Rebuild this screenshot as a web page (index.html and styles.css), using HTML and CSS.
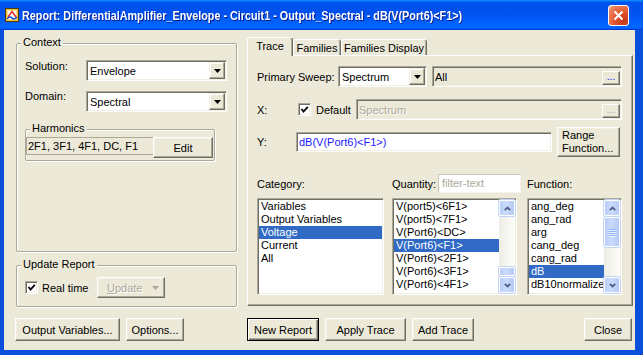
FILE: index.html
```html
<!DOCTYPE html>
<html>
<head>
    <title>Report</title>
    <link rel="stylesheet" href="styles.css">
</head>
<body>
    <div id="window">
        <div id="titleBar">
            <svg class="appIcon" width="14" height="14" viewBox="0 0 14 14">
                <rect x="0.5" y="0.5" width="13" height="13" fill="#f2c12e" stroke="#4a3c0c"/>
                <rect x="2.5" y="2.5" width="9" height="9" fill="#fff"/>
                <path d="M3 9 L7 3.5 L11 9" fill="none" stroke="#e0301e" stroke-width="1.6"/>
                <path d="M2 11 Q5 7.5 7 10 T12 9" fill="none" stroke="#1e50d0" stroke-width="1.6"/>
            </svg>
            <span class="titleText">Report: DifferentialAmplifier_Envelope - Circuit1 - Output_Spectral - dB(V(Port6)&lt;F1&gt;)</span>
            <div class="closeBtn">
                <svg width="11" height="11" viewBox="0 0 11 11"><path d="M1.5 1.5 L9.5 9.5 M9.5 1.5 L1.5 9.5" stroke="#fff" stroke-width="2"/></svg>
            </div>
        </div>
        <div id="client">
            <div id="leftSide">
                <div class="group contextGroup">
                    <span class="caption">Context</span>
                    <div class="formRow">
                        <span class="ctxLabel">Solution:</span>
                        <div class="combo ctxCombo"><span class="comboText">Envelope</span><span class="dropBtn"><svg width="7" height="4"><polygon points="0,0 7,0 3.5,4" fill="#000"/></svg></span></div>
                    </div>
                    <div class="formRow">
                        <span class="ctxLabel domainLabel">Domain:</span>
                        <div class="combo ctxCombo"><span class="comboText">Spectral</span><span class="dropBtn"><svg width="7" height="4"><polygon points="0,0 7,0 3.5,4" fill="#000"/></svg></span></div>
                    </div>
                    <div class="group harmonicsGroup">
                        <span class="caption">Harmonics</span>
                        <div class="harmonicsRow">
                            <div class="staticBox">2F1, 3F1, 4F1, DC, F1</div>
                            <div class="btn editBtn">Edit</div>
                        </div>
                    </div>
                </div>
                <div class="group updateGroup">
                    <span class="caption">Update Report</span>
                    <div class="updateRow">
                        <span class="checkbox"><svg width="9" height="9"><polyline points="1.5,4 3.5,6.5 7.8,1.8" fill="none" stroke="#000" stroke-width="1.8"/></svg></span>
                        <span class="checkLabel realTimeLabel">Real time</span>
                        <div class="btn updateBtn"><span class="disabledText"><u>U</u>pdate</span><svg width="7" height="4"><polygon points="0,0 7,0 3.5,4" fill="#ACA899"/></svg></div>
                    </div>
                </div>
                <div class="buttonRow">
                    <div class="btn outputVarsBtn">Output Variables...</div>
                    <div class="btn optionsBtn">Options...</div>
                </div>
            </div>

            <div id="rightSide">
                <div class="tabStrip">
                    <div class="tab selected traceTab">Trace</div>
                    <div class="tab familiesTab">Families</div>
                    <div class="tab famDisplayTab">Families Display</div>
                </div>
                <div class="tabPane">
                    <div class="paneRow sweepRow">
                        <span class="sweepLabel">Primary Sweep:</span>
                        <div class="combo sweepCombo"><span class="comboText">Spectrum</span><span class="dropBtn"><svg width="7" height="4"><polygon points="0,0 7,0 3.5,4" fill="#000"/></svg></span></div>
                        <div class="field readonlyField allField"><span class="fieldText">All</span><span class="ellipsisBtn">...</span></div>
                    </div>
                    <div class="paneRow xRow">
                        <span class="xLabel">X:</span>
                        <span class="checkbox"><svg width="9" height="9"><polyline points="1.5,4 3.5,6.5 7.8,1.8" fill="none" stroke="#000" stroke-width="1.8"/></svg></span>
                        <span class="checkLabel defaultLabel">Default</span>
                        <div class="field readonlyField specField"><span class="fieldText disabledText">Spectrum</span><span class="ellipsisBtn disabledDots">...</span></div>
                    </div>
                    <div class="paneRow yRow">
                        <span class="yLabel">Y:</span>
                        <div class="field exprField"><span class="fieldText">dB(V(Port6)&lt;F1&gt;)</span></div>
                        <div class="btn rangeBtn">Range<br>Function...</div>
                    </div>
                    <div class="paneRow headRow">
                        <span class="colHead catHead">Category:</span>
                        <div class="colHead qtyHead"><span class="qtyLabel">Quantity:</span><div class="filterBox">filter-text</div></div>
                        <span class="colHead funcHead">Function:</span>
                    </div>
                    <div class="paneRow listRow">
                        <div class="listBox catList">
                            <div class="listItems">
                                <div class="item">Variables</div>
                                <div class="item">Output Variables</div>
                                <div class="item sel">Voltage</div>
                                <div class="item">Current</div>
                                <div class="item">All</div>
                            </div>
                        </div>
                        <div class="listBox qtyList">
                            <div class="listItems">
                                <div class="item">V(port5)&lt;6F1&gt;</div>
                                <div class="item">V(port5)&lt;7F1&gt;</div>
                                <div class="item">V(Port6)&lt;DC&gt;</div>
                                <div class="item sel">V(Port6)&lt;F1&gt;</div>
                                <div class="item">V(Port6)&lt;2F1&gt;</div>
                                <div class="item">V(Port6)&lt;3F1&gt;</div>
                                <div class="item">V(Port6)&lt;4F1&gt;</div>
                                <div class="item">V(Port6)&lt;5F1&gt;</div>
                            </div>
                            <div class="vscroll">
                                <div class="sbBtn"><svg width="7" height="5"><polyline points="0.8,4.2 3.5,1.5 6.2,4.2" fill="none" stroke="#4D6185" stroke-width="1.8"/></svg></div>
                                <div class="sbTrack"><div class="sbThumb smallThumb"></div></div>
                                <div class="sbBtn"><svg width="7" height="5"><polyline points="0.8,0.8 3.5,3.5 6.2,0.8" fill="none" stroke="#4D6185" stroke-width="1.8"/></svg></div>
                            </div>
                        </div>
                        <div class="listBox funcList">
                            <div class="listItems">
                                <div class="item">ang_deg</div>
                                <div class="item">ang_rad</div>
                                <div class="item">arg</div>
                                <div class="item">cang_deg</div>
                                <div class="item">cang_rad</div>
                                <div class="item sel">dB</div>
                                <div class="item">dB10normalize</div>
                                <div class="item">dB20normalize</div>
                            </div>
                            <div class="vscroll">
                                <div class="sbBtn"><svg width="7" height="5"><polyline points="0.8,4.2 3.5,1.5 6.2,4.2" fill="none" stroke="#4D6185" stroke-width="1.8"/></svg></div>
                                <div class="sbTrack"><div class="sbThumb bigThumb"><i></i><i></i><i></i><i></i></div></div>
                                <div class="sbBtn"><svg width="7" height="5"><polyline points="0.8,0.8 3.5,3.5 6.2,0.8" fill="none" stroke="#4D6185" stroke-width="1.8"/></svg></div>
                            </div>
                        </div>
                    </div>
                </div>
                <div class="buttonRow rightButtons">
                    <div class="btn defaultBtn newReportBtn">New Report</div>
                    <div class="btn applyBtn">Apply Trace</div>
                    <div class="btn addBtn">Add Trace</div>
                    <div class="spacer"></div>
                    <div class="btn closeDlgBtn">Close</div>
                </div>
            </div>
        </div>
    </div>
</body>
</html>
```

FILE: styles.css
```css
html, body {
    padding: 0;
    margin: 0;
    font-family: "Liberation Sans", Arial, Helvetica, sans-serif;
    font-size: 11px;
    color: #000;
}
#window {
    width: 643px;
    height: 355px;
    display: flex;
    flex-direction: column;
    background: #0A4FDC;
    overflow: hidden;
}

/* title bar */
#titleBar {
    height: 30px;
    flex: none;
    display: flex;
    align-items: center;
    background: linear-gradient(180deg, #0997ff, #0053ee 8%, #0050ee 40%, #0066ff 88%, #0066ff 93%, #005bff 95%, #003dd7 96%, #003dd7);
    color: white;
}
.appIcon {
    margin-left: 5px;
    margin-right: 3px;
    flex: none;
}
.titleText {
    font-weight: bold;
    font-size: 13px;
    white-space: nowrap;
    transform: scaleX(0.83);
    transform-origin: left center;
    text-shadow: 1px 1px 0 #0a1a8a;
}
.closeBtn {
    margin-left: auto;
    margin-right: 14px;
    width: 21px;
    height: 21px;
    flex: none;
    box-sizing: border-box;
    border: 1px solid #fff;
    border-radius: 3px;
    background: radial-gradient(circle at 80% 80%, #c4381a 0%, #e0552c 45%, #ec8a66 85%, #f8c3ae 100%);
    display: flex;
    align-items: center;
    justify-content: center;
}

#client {
    flex: 1;
    margin: 0 8px 5px 4px;
    background: #ECE9D8;
    display: flex;
}

/* common controls */
.group {
    position: relative;
    box-sizing: border-box;
    border: 1px solid #ACA899;
    border-radius: 2px;
    box-shadow: inset 1px 1px 0 #fff, 1px 1px 0 #fff;
}
.caption {
    position: absolute;
    top: -8px;
    left: 4px;
    padding: 0 2px;
    line-height: 13px;
    background: #ECE9D8;
}
.btn {
    box-sizing: border-box;
    height: 23px;
    border: 1px solid;
    border-color: #fff #716F64 #716F64 #fff;
    box-shadow: inset -1px -1px 0 #ACA899, inset 1px 1px 0 #F1EFE2;
    background: #ECE9D8;
    display: flex;
    align-items: center;
    justify-content: center;
    white-space: nowrap;
    flex: none;
}
.defaultBtn {
    border-color: #000;
    box-shadow: inset 1px 1px 0 #fff, inset -1px -1px 0 #716F64, inset -2px -2px 0 #ACA899;
}
.combo, .field, .listBox, .checkbox {
    box-sizing: border-box;
    border: 1px solid;
    border-color: #ACA899 #fff #fff #ACA899;
    box-shadow: inset 1px 1px 0 #716F64, inset -1px -1px 0 #F1EFE2;
    padding: 1px;
    background: #fff;
    flex: none;
}
.combo {
    height: 21px;
    display: flex;
    align-items: center;
}
.comboText {
    flex: 1;
    padding-left: 2px;
    white-space: nowrap;
}
.dropBtn {
    box-sizing: border-box;
    width: 16px;
    height: 17px;
    border: 1px solid;
    border-color: #F1EFE2 #716F64 #716F64 #F1EFE2;
    box-shadow: inset -1px -1px 0 #ACA899, inset 1px 1px 0 #fff;
    background: #ECE9D8;
    display: flex;
    align-items: center;
    justify-content: center;
}
.checkbox {
    width: 13px;
    height: 13px;
    display: flex;
    align-items: center;
    justify-content: center;
}
.disabledText {
    color: #ACA899;
    text-shadow: 1px 1px 0 #fff;
}
.buttonRow {
    display: flex;
    margin-top: 11px;
}

/* left column */
#leftSide {
    width: 221px;
    padding-left: 11px;
    display: flex;
    flex-direction: column;
    flex: none;
}
.contextGroup {
    margin: 13px 0 0 1px;
    width: 221px;
    height: 209px;
    padding: 16px 0 0 8px;
}
.formRow {
    display: flex;
    align-items: flex-start;
    height: 21px;
    margin-bottom: 10px;
}
.ctxLabel {
    width: 61px;
    line-height: 13px;
}
.domainLabel {
    margin-top: -1px;
}
.ctxCombo {
    width: 141px;
}
.harmonicsGroup {
    margin-top: 17px;
    width: 190px;
    height: 32px;
    padding-top: 7px;
}
.harmonicsRow {
    display: flex;
    align-items: flex-start;
}
.staticBox {
    box-sizing: border-box;
    width: 127px;
    height: 18px;
    border: 1px solid #ACA899;
    border-right: none;
    line-height: 16px;
    padding-left: 1px;
    white-space: nowrap;
}
.editBtn {
    width: 60px;
    height: 21px;
}
.updateGroup {
    margin: 13px 0 0 1px;
    width: 221px;
    height: 42px;
    padding: 11px 0 0 8px;
}
.updateRow {
    display: flex;
    align-items: center;
    height: 21px;
}
.checkLabel {
    margin-left: 4px;
    white-space: nowrap;
}
.realTimeLabel {
    width: 55px;
}
.updateBtn {
    width: 68px;
    height: 21px;
    justify-content: flex-start;
    padding-left: 9px;
}
.updateBtn svg {
    margin-left: 10px;
}
.buttonRow .btn + .btn {
    margin-left: 6px;
}
.outputVarsBtn {
    width: 105px;
}
.optionsBtn {
    width: 58px;
}

/* right column */
#rightSide {
    margin: 7px 0 0 11px;
    width: 386px;
    display: flex;
    flex-direction: column;
    flex: none;
}
.tabStrip {
    display: flex;
    align-items: flex-end;
    height: 18px;
}
.tab {
    box-sizing: border-box;
    height: 16px;
    padding-top: 2px;
    border-left: 1px solid #fff;
    border-top: 1px solid #fff;
    border-right: 1px solid #716F64;
    box-shadow: inset -1px 0 0 #ACA899;
    border-radius: 3px 3px 0 0;
    background: #ECE9D8;
    text-align: center;
    line-height: 13px;
    white-space: nowrap;
}
.tab.selected {
    height: 19px;
    margin-bottom: -1px;
    position: relative;
    z-index: 2;
}
.traceTab {
    width: 46px;
}
.familiesTab {
    width: 48px;
}
.famDisplayTab {
    width: 86px;
}
.tabPane {
    box-sizing: border-box;
    height: 251px;
    border: 1px solid;
    border-color: #fff #716F64 #716F64 #fff;
    box-shadow: inset -1px -1px 0 #ACA899;
    padding: 10px 0 0 9px;
}
.paneRow {
    display: flex;
    align-items: center;
}
.sweepRow {
    height: 21px;
}
.sweepLabel {
    width: 81px;
    white-space: nowrap;
}
.sweepCombo {
    width: 89px;
}
.field {
    height: 21px;
    display: flex;
    align-items: center;
}
.fieldText {
    padding-left: 1px;
    white-space: nowrap;
}
.readonlyField {
    background: #ECE9D8;
}
.allField {
    width: 190px;
    margin-left: 5px;
}
.ellipsisBtn {
    box-sizing: border-box;
    margin-left: auto;
    align-self: flex-end;
    width: 18px;
    height: 14px;
    border: 1px solid;
    border-color: #fff #716F64 #716F64 #fff;
    box-shadow: inset -1px -1px 0 #ACA899;
    background: #ECE9D8;
    color: #0000ff;
    font-size: 10px;
    line-height: 10px;
    text-align: center;
}
.disabledDots {
    color: #ACA899;
}
.xRow {
    margin-top: 12px;
    height: 21px;
}
.xLabel {
    width: 41px;
}
.defaultLabel {
    margin-left: 5px;
    width: 40px;
}
.specField {
    width: 266px;
}
.yRow {
    margin-top: 7px;
    height: 30px;
}
.yLabel {
    width: 39px;
}
.exprField {
    width: 256px;
    height: 20px;
    color: #1a1aff;
}
.rangeBtn {
    margin-left: 5px;
    width: 63px;
    height: 30px;
    justify-content: flex-start;
    padding-left: 4px;
    line-height: 13px;
}
.headRow {
    margin-top: 17px;
    height: 19px;
}
.catHead, .qtyHead {
    width: 135px;
    flex: none;
}
.qtyHead {
    display: flex;
    align-items: center;
}
.qtyLabel {
    width: 46px;
}
.filterBox {
    box-sizing: border-box;
    width: 83px;
    height: 19px;
    border: 1px solid;
    border-color: #C9C6B6 #F4F3EE #F4F3EE #C9C6B6;
    background: #fff;
    color: #ACA899;
    padding-left: 3px;
    line-height: 17px;
}
.listRow {
    margin-top: 5px;
    height: 97px;
    align-items: stretch;
}
.listBox {
    display: flex;
    overflow: hidden;
    height: 97px;
}
.catList {
    width: 127px;
    margin-right: 8px;
}
.qtyList {
    width: 125px;
    margin-right: 10px;
}
.funcList {
    width: 95px;
}
.listItems {
    flex: 1;
    overflow: hidden;
}
.item {
    height: 13px;
    line-height: 13px;
    padding-left: 2px;
    white-space: nowrap;
}
.item.sel {
    background: #316AC5;
    color: #fff;
}
.vscroll {
    width: 16px;
    flex: none;
    display: flex;
    flex-direction: column;
    background: linear-gradient(to right, #EEEDE5, #FDFDFA);
}
.sbBtn, .sbThumb {
    box-sizing: border-box;
    border: 1px solid #fff;
    border-radius: 2px;
    background: linear-gradient(to right, #B9CEFA, #CADBFC 45%, #B4C9F6);
    box-shadow: 0 0 0 1px #C3D3F5;
    display: flex;
    align-items: center;
    justify-content: center;
}
.sbBtn {
    height: 16px;
    flex: none;
}
.sbTrack {
    flex: 1;
    display: flex;
    flex-direction: column;
    padding: 1px 0;
}
.smallThumb {
    margin-top: auto;
    height: 9px;
}
.bigThumb {
    height: 30px;
    flex-direction: column;
    gap: 1px;
}
.bigThumb i {
    display: block;
    width: 7px;
    height: 1px;
    background: #8CB0F8;
    box-shadow: 0 1px 0 #EEF4FE;
}
.rightButtons {
    margin-top: 12px;
}
.rightButtons .applyBtn {
    width: 81px;
    margin-left: 5px;
}
.rightButtons .addBtn {
    width: 62px;
    margin-left: 4px;
}
.newReportBtn {
    width: 72px;
}
.spacer {
    flex: 1;
}
.rightButtons .closeDlgBtn {
    width: 48px;
    margin-left: 0;
    margin-right: 1px;
}
```
